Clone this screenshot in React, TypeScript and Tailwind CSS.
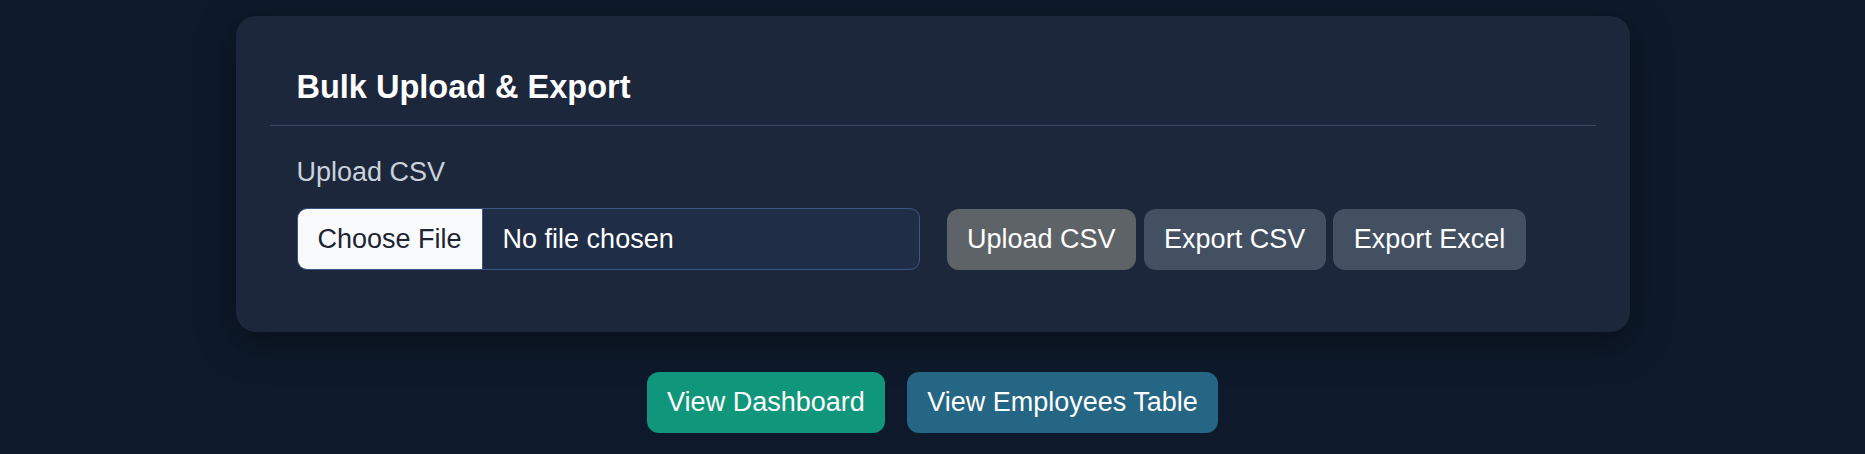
// Bulk upload / export panel

import React from 'react';

const ActionButton: React.FC<{ label: string; tone: string }> = ({ label, tone }) => (
  <button
    type="button"
    className={`rounded-[12px] px-[20.5px] py-[15px] text-[27px] leading-[31px] text-white ${tone}`}
  >
    {label}
  </button>
);

const App: React.FC = () => {
  return (
    <div className="min-h-screen bg-[#0e1a2b] font-['Liberation_Sans',Arial,sans-serif] pt-[16px]">
      {/* Card */}
      <div className="mx-auto w-[1394px] rounded-[20px] bg-[#1d273b] px-[34px] pt-[53px] pb-[62px] shadow-[0_10px_40px_rgba(0,0,0,0.45)]">
        <div className="border-b border-[#3a4a67] px-[27px] pb-[19px]">
          <h2 className="text-[32.5px] font-bold leading-[37px] text-white">Bulk Upload &amp; Export</h2>
        </div>

        <div className="px-[27px] pt-[31px]">
          <label className="block text-[27px] leading-[31px] text-[#c9d1dd]">Upload CSV</label>

          <div className="mt-[20px] flex items-center gap-[27px]">
            {/* File picker */}
            <label className="flex h-[62px] w-[623px] cursor-pointer items-stretch overflow-hidden rounded-[10px] border border-[#3b5682] bg-[#1f2d47]">
              <input type="file" accept=".csv" className="sr-only" />
              <span className="flex items-center border-r border-[#3b5682] bg-[#f8fafc] px-[20px] text-[27px] text-[#1e2433]">
                Choose File
              </span>
              <span className="flex items-center pl-[20px] text-[27px] text-white">No file chosen</span>
            </label>

            <div className="flex items-center gap-[7.5px]">
              <ActionButton label="Upload CSV" tone="bg-[#5e6368]" />
              <ActionButton label="Export CSV" tone="bg-[#435062]" />
              <ActionButton label="Export Excel" tone="bg-[#435062]" />
            </div>
          </div>
        </div>
      </div>

      {/* Navigation */}
      <div className="mt-[40px] flex justify-center gap-[21.5px]">
        <ActionButton label="View Dashboard" tone="bg-[#10967a]" />
        <ActionButton label="View Employees Table" tone="bg-[#246683]" />
      </div>
    </div>
  );
};

export default App;
